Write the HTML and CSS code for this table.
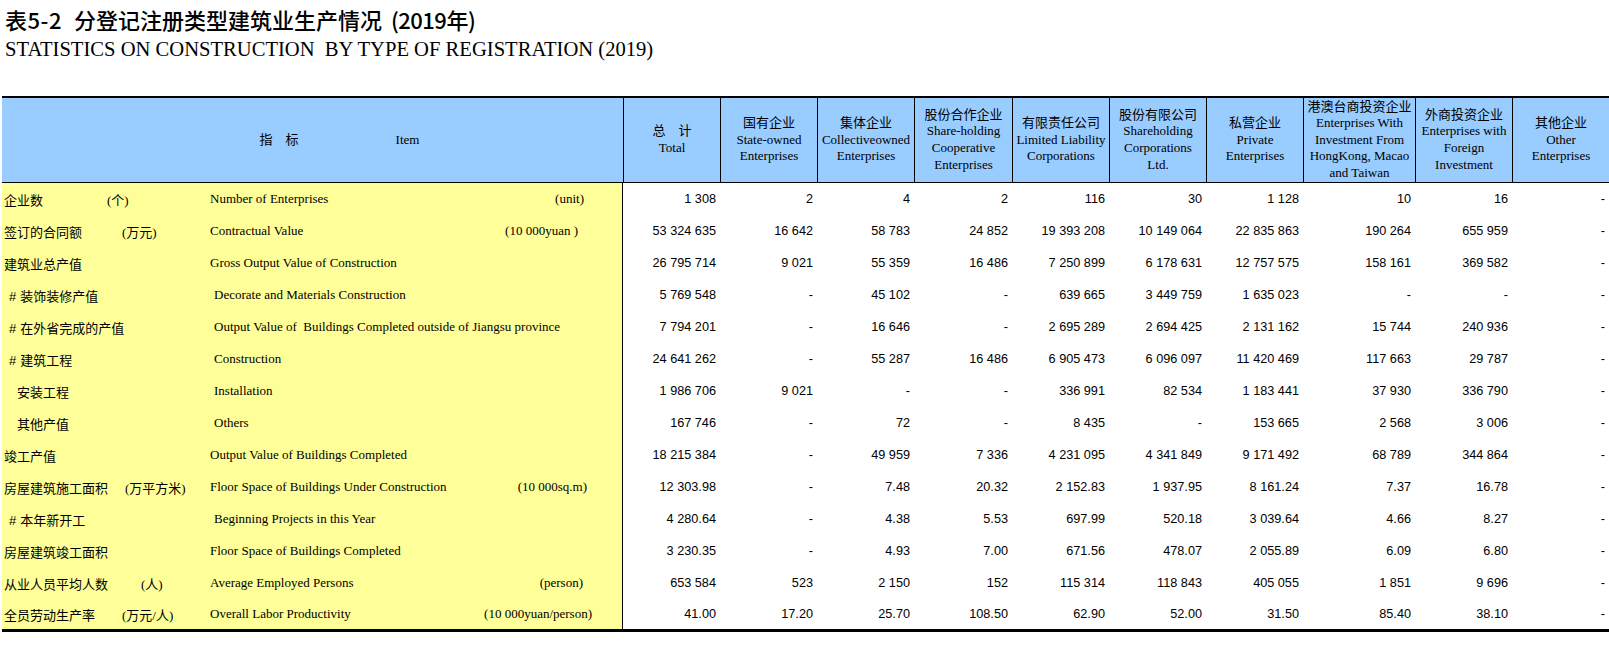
FILE: index.html
```html
<!DOCTYPE html>
<html lang="zh-CN">
<head>
<meta charset="utf-8">
<title>表5-2 分登记注册类型建筑业生产情况（2019年）</title>
<link rel="stylesheet" href="styles.css">
</head>
<body>
<h1 class="title-cn"><span class="tno">表5-2</span>分登记注册类型建筑业生产情况 <span class="yr">(2019年)</span></h1>
<h2 class="title-en">STATISTICS ON CONSTRUCTION&nbsp; BY TYPE OF REGISTRATION (2019)</h2>
<table class="stat">
  <colgroup>
    <col class="c-item"><col class="c-n"><col class="c-n"><col class="c-n"><col class="c-w98"><col class="c-n"><col class="c-n"><col class="c-n"><col class="c-w112"><col class="c-n"><col class="c-n">
  </colgroup>
  <thead>
    <tr>
      <th class="h-item"><span class="zb">指&emsp;标</span><span class="item-en">Item</span></th>
      <th>总&emsp;计<br>Total</th>
      <th>国有企业<br>State-owned<br>Enterprises</th>
      <th>集体企业<br>Collectiveowned<br>Enterprises</th>
      <th>股份合作企业<br>Share-holding<br>Cooperative<br>Enterprises</th>
      <th>有限责任公司<br>Limited Liability<br>Corporations</th>
      <th>股份有限公司<br>Shareholding<br>Corporations<br>Ltd.</th>
      <th>私营企业<br>Private<br>Enterprises</th>
      <th>港澳台商投资企业<br>Enterprises With<br>Investment From<br>HongKong, Macao<br>and Taiwan</th>
      <th>外商投资企业<br>Enterprises with<br>Foreign<br>Investment</th>
      <th>其他企业<br>Other<br>Enterprises</th>
    </tr>
  </thead>
  <tbody>
    <tr>
      <td class="item"><div class="it u107"><span class="cn"><span class="lab">企业数</span><span class="unit">(个)</span></span><span class="en">Number of Enterprises</span><span class="eu r38">(unit)</span></div></td>
      <td>1 308</td><td>2</td><td>4</td><td>2</td><td>116</td><td>30</td><td>1 128</td><td>10</td><td>16</td><td>-</td>
    </tr>
    <tr>
      <td class="item"><div class="it u120"><span class="cn"><span class="lab">签订的合同额</span><span class="unit">(万元)</span></span><span class="en">Contractual Value</span><span class="eu r44">(10 000yuan )</span></div></td>
      <td>53 324 635</td><td>16 642</td><td>58 783</td><td>24 852</td><td>19 393 208</td><td>10 149 064</td><td>22 835 863</td><td>190 264</td><td>655 959</td><td>-</td>
    </tr>
    <tr>
      <td class="item"><div class="it"><span class="cn"><span class="lab">建筑业总产值</span></span><span class="en">Gross Output Value of Construction</span><span class="eu"></span></div></td>
      <td>26 795 714</td><td>9 021</td><td>55 359</td><td>16 486</td><td>7 250 899</td><td>6 178 631</td><td>12 757 575</td><td>158 161</td><td>369 582</td><td>-</td>
    </tr>
    <tr>
      <td class="item"><div class="it sub"><span class="cn"><span class="lab"><span class="hash">#</span>装饰装修产值</span></span><span class="en">Decorate and Materials Construction</span><span class="eu"></span></div></td>
      <td>5 769 548</td><td>-</td><td>45 102</td><td>-</td><td>639 665</td><td>3 449 759</td><td>1 635 023</td><td>-</td><td>-</td><td>-</td>
    </tr>
    <tr>
      <td class="item"><div class="it sub"><span class="cn"><span class="lab"><span class="hash">#</span>在外省完成的产值</span></span><span class="en">Output Value of&nbsp; Buildings Completed outside of Jiangsu province</span><span class="eu"></span></div></td>
      <td>7 794 201</td><td>-</td><td>16 646</td><td>-</td><td>2 695 289</td><td>2 694 425</td><td>2 131 162</td><td>15 744</td><td>240 936</td><td>-</td>
    </tr>
    <tr>
      <td class="item"><div class="it sub"><span class="cn"><span class="lab"><span class="hash">#</span>建筑工程</span></span><span class="en">Construction</span><span class="eu"></span></div></td>
      <td>24 641 262</td><td>-</td><td>55 287</td><td>16 486</td><td>6 905 473</td><td>6 096 097</td><td>11 420 469</td><td>117 663</td><td>29 787</td><td>-</td>
    </tr>
    <tr>
      <td class="item"><div class="it sub2"><span class="cn"><span class="lab">安装工程</span></span><span class="en">Installation</span><span class="eu"></span></div></td>
      <td>1 986 706</td><td>9 021</td><td>-</td><td>-</td><td>336 991</td><td>82 534</td><td>1 183 441</td><td>37 930</td><td>336 790</td><td>-</td>
    </tr>
    <tr>
      <td class="item"><div class="it sub2"><span class="cn"><span class="lab">其他产值</span></span><span class="en">Others</span><span class="eu"></span></div></td>
      <td>167 746</td><td>-</td><td>72</td><td>-</td><td>8 435</td><td>-</td><td>153 665</td><td>2 568</td><td>3 006</td><td>-</td>
    </tr>
    <tr>
      <td class="item"><div class="it"><span class="cn"><span class="lab">竣工产值</span></span><span class="en">Output Value of Buildings Completed</span><span class="eu"></span></div></td>
      <td>18 215 384</td><td>-</td><td>49 959</td><td>7 336</td><td>4 231 095</td><td>4 341 849</td><td>9 171 492</td><td>68 789</td><td>344 864</td><td>-</td>
    </tr>
    <tr>
      <td class="item"><div class="it u124"><span class="cn"><span class="lab">房屋建筑施工面积</span><span class="unit">(万平方米)</span></span><span class="en">Floor Space of Buildings Under Construction</span><span class="eu r35">(10 000sq.m)</span></div></td>
      <td>12 303.98</td><td>-</td><td>7.48</td><td>20.32</td><td>2 152.83</td><td>1 937.95</td><td>8 161.24</td><td>7.37</td><td>16.78</td><td>-</td>
    </tr>
    <tr>
      <td class="item"><div class="it sub"><span class="cn"><span class="lab"><span class="hash">#</span>本年新开工</span></span><span class="en">Beginning Projects in this Year</span><span class="eu"></span></div></td>
      <td>4 280.64</td><td>-</td><td>4.38</td><td>5.53</td><td>697.99</td><td>520.18</td><td>3 039.64</td><td>4.66</td><td>8.27</td><td>-</td>
    </tr>
    <tr>
      <td class="item"><div class="it"><span class="cn"><span class="lab">房屋建筑竣工面积</span></span><span class="en">Floor Space of Buildings Completed</span><span class="eu"></span></div></td>
      <td>3 230.35</td><td>-</td><td>4.93</td><td>7.00</td><td>671.56</td><td>478.07</td><td>2 055.89</td><td>6.09</td><td>6.80</td><td>-</td>
    </tr>
    <tr>
      <td class="item"><div class="it u140"><span class="cn"><span class="lab">从业人员平均人数</span><span class="unit">(人)</span></span><span class="en">Average Employed Persons</span><span class="eu r39">(person)</span></div></td>
      <td>653 584</td><td>523</td><td>2 150</td><td>152</td><td>115 314</td><td>118 843</td><td>405 055</td><td>1 851</td><td>9 696</td><td>-</td>
    </tr>
    <tr class="last">
      <td class="item"><div class="it u120"><span class="cn"><span class="lab">全员劳动生产率</span><span class="unit">(万元/人)</span></span><span class="en">Overall Labor Productivity</span><span class="eu r31">(10 000yuan/person)</span></div></td>
      <td>41.00</td><td>17.20</td><td>25.70</td><td>108.50</td><td>62.90</td><td>52.00</td><td>31.50</td><td>85.40</td><td>38.10</td><td>-</td>
    </tr>
  </tbody>
</table>
</body>
</html>
```
FILE: styles.css
```css
html, body {
  margin: 0;
  padding: 0;
  background: #ffffff;
  color: #000000;
}

body {
  font-family: "Liberation Sans", Arial, sans-serif;
}

.title-cn {
  margin: 0;
  padding: 8px 0 0 5px;
  font-family: "Noto Sans CJK SC", sans-serif;
  font-weight: 500;
  font-size: 22px;
  line-height: 22px;
  white-space: pre;
}

.tno {
  display: inline-block;
  margin-right: 12px;
  letter-spacing: 0.5px;
}

.yr {
  margin-left: 4px;
  letter-spacing: -0.5px;
}

.title-en {
  margin: 0;
  padding: 8px 0 0 5px;
  font-family: "Liberation Serif", "Times New Roman", serif;
  font-weight: normal;
  font-size: 20.6px;
  line-height: 22px;
  white-space: nowrap;
}

.stat {
  margin: 36px 0 0 2px;
  width: 1607px;
  table-layout: fixed;
  border-collapse: separate;
  border-spacing: 0;
}

.c-item { width: 621px; }
.c-n { width: 97px; }
.c-w98 { width: 98px; }
.c-w112 { width: 112px; }

.stat th {
  height: 84px;
  padding: 0;
  background: #99ccff;
  border-top: 2px solid #000;
  border-bottom: 1px solid #000;
  border-left: 1px solid #000;
  font-family: "Liberation Serif", "Noto Sans CJK SC", serif;
  font-weight: normal;
  font-size: 13px;
  line-height: 16.6px;
  text-align: center;
  vertical-align: middle;
  white-space: nowrap;
  overflow: hidden;
}

.stat th.h-item {
  border-left: none;
  padding-left: 54px;
}

.zb {
  font-family: "Noto Sans CJK SC", sans-serif;
}

.item-en {
  margin-left: 97px;
}

.stat td {
  height: 32px;
  padding: 0 4px 0 0;
  font-size: 12.7px;
  text-align: right;
  vertical-align: middle;
  white-space: nowrap;
}

.stat tr.last td {
  height: 30px;
  border-bottom: 3px solid #000;
}

.stat td.item {
  padding: 0 0 0 2px;
  background: #ffff99;
  border-right: 1px solid #000;
  text-align: left;
}

.it {
  display: grid;
  grid-template-columns: 206px 1fr auto;
  align-items: center;
  font-family: "Liberation Serif", "Times New Roman", serif;
  font-size: 13px;
}

.cn {
  display: flex;
  align-items: center;
}

.lab {
  font-family: "Noto Sans CJK SC", sans-serif;
  font-size: 13px;
}

.u107 .lab { width: 103px; }
.u120 .lab { width: 118px; }
.u124 .lab { width: 121px; }
.u140 .lab { width: 137px; }

.unit {
  font-family: "Liberation Serif", "Noto Sans CJK SC", serif;
}

.sub .lab { padding-left: 5px; }
.sub .en { padding-left: 4px; }
.sub2 .lab { padding-left: 13px; }
.sub2 .en { padding-left: 4px; }

.hash {
  font-family: "Liberation Sans", sans-serif;
  margin-right: 4px;
}

.eu { padding-right: 38px; }
.eu.r31 { padding-right: 30px; }
.eu.r35 { padding-right: 35px; }
.eu.r39 { padding-right: 39px; }
.eu.r44 { padding-right: 44px; }
```
